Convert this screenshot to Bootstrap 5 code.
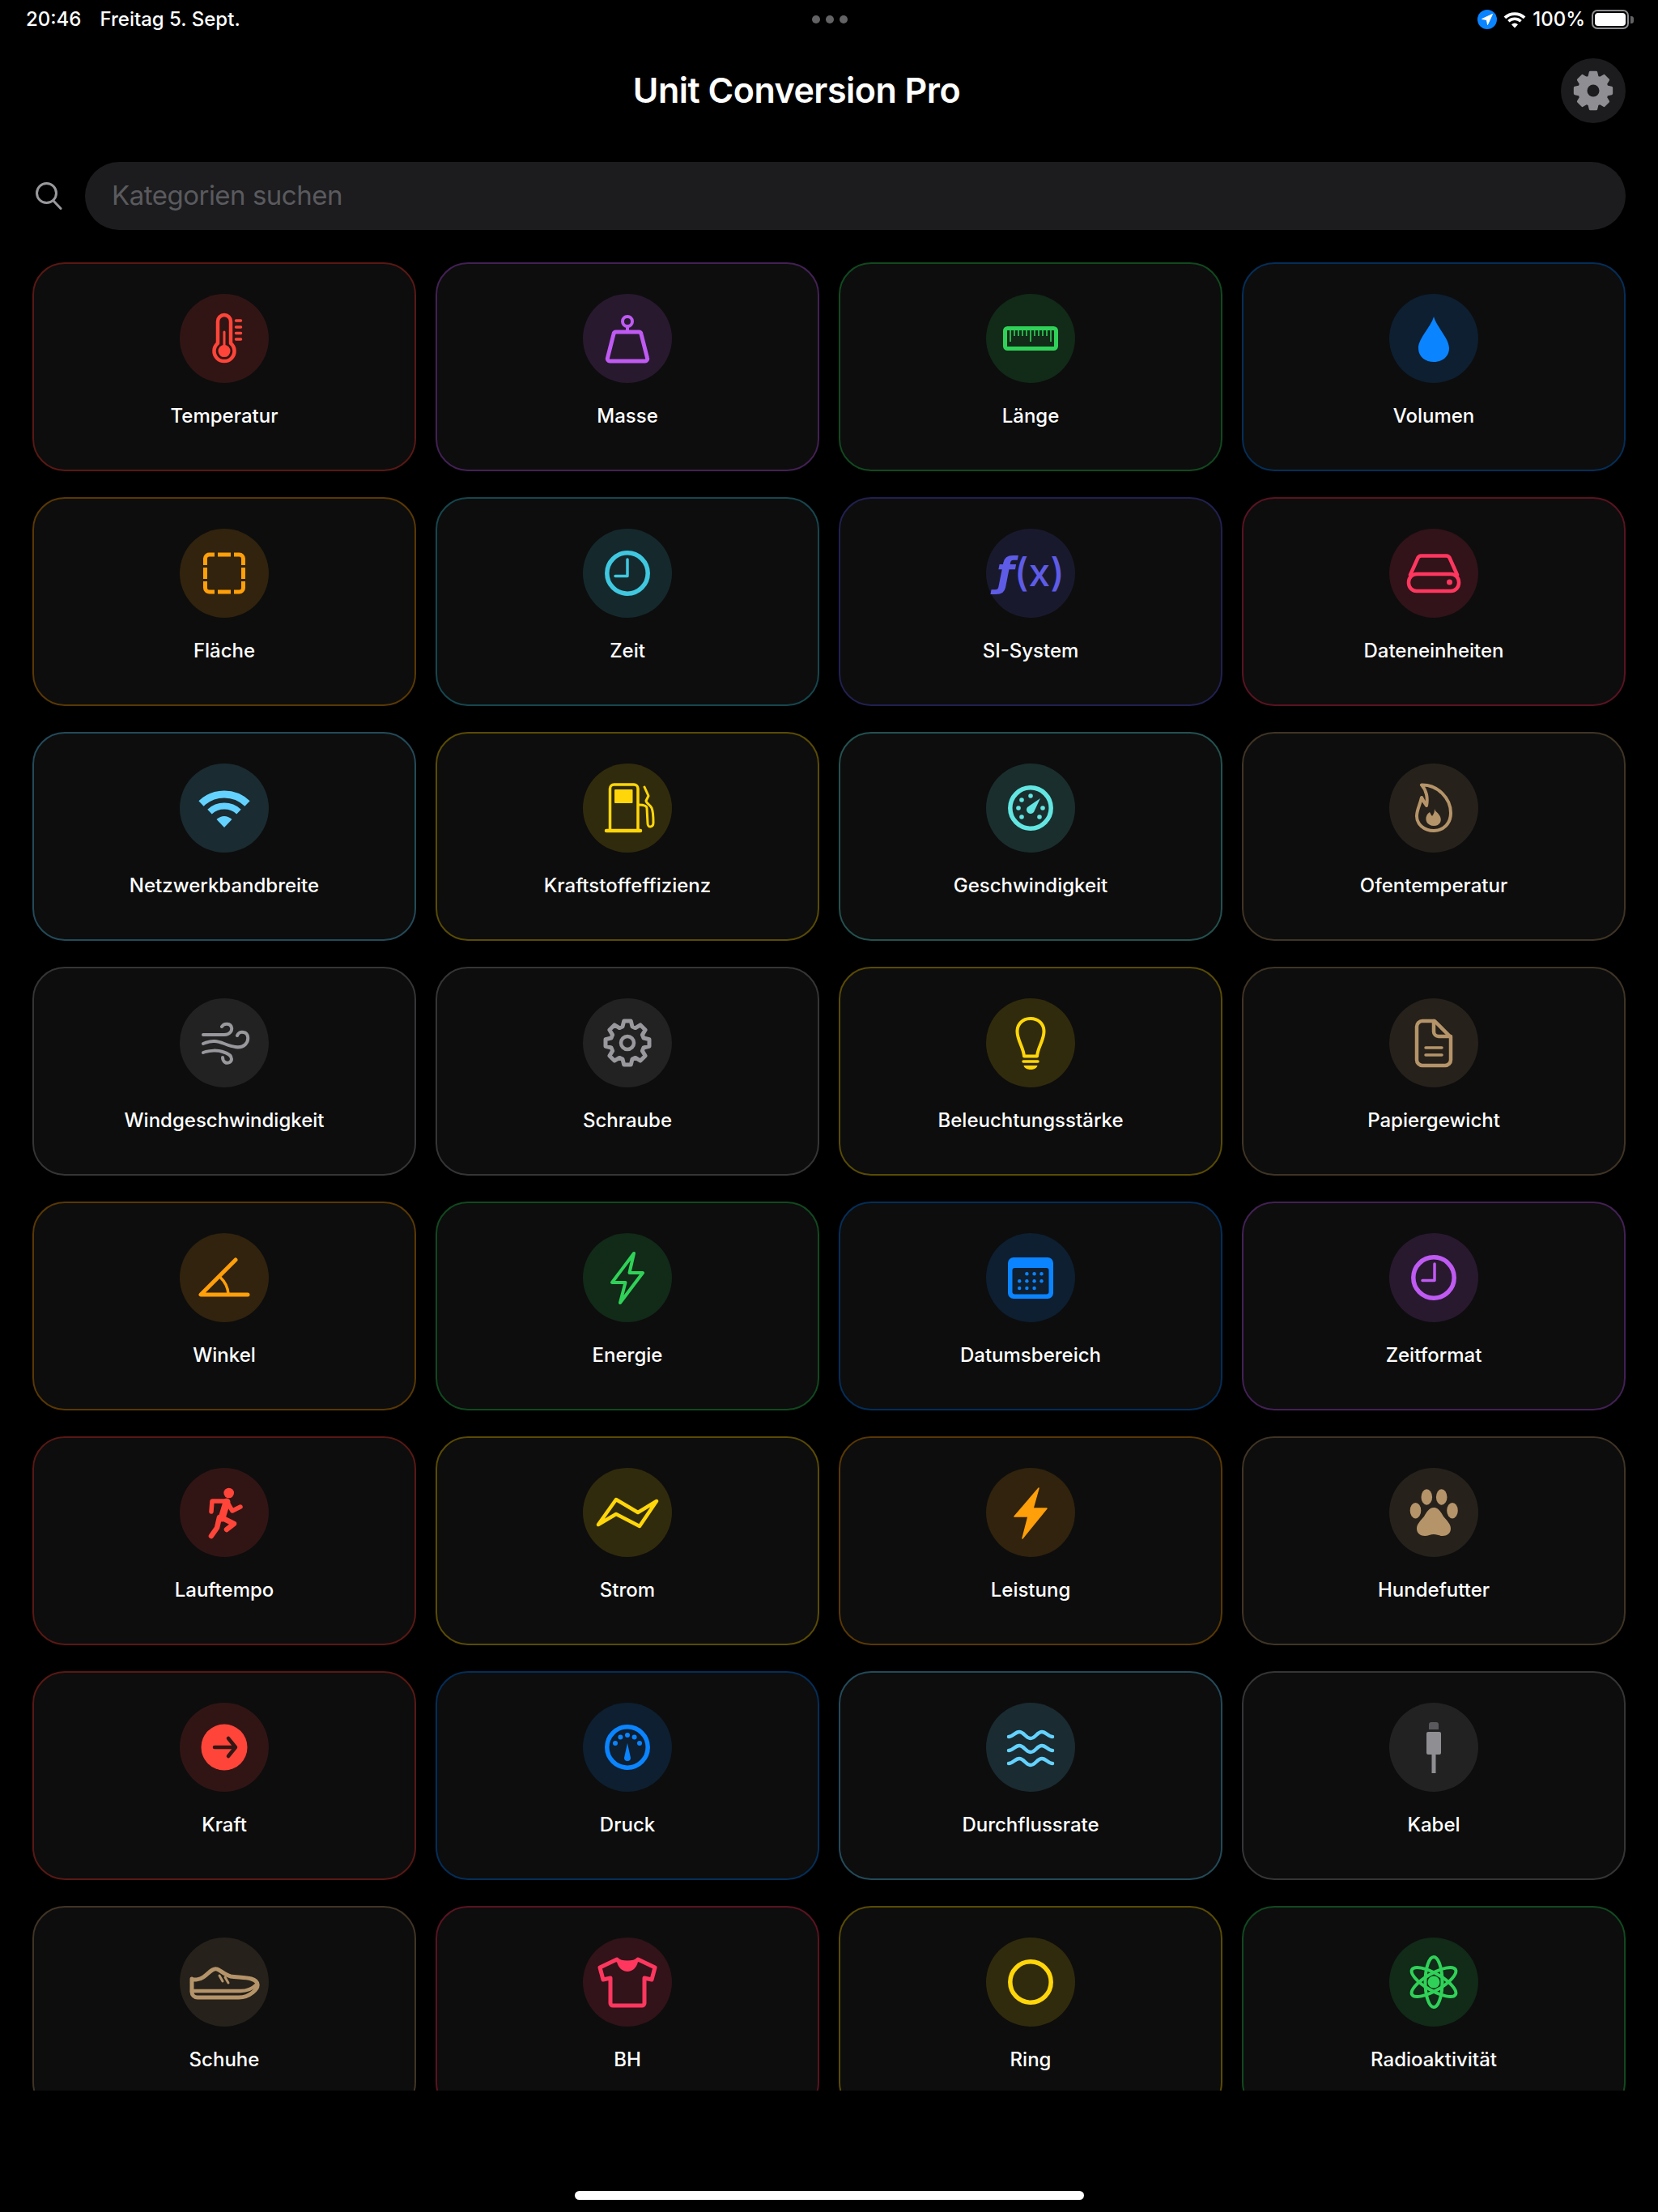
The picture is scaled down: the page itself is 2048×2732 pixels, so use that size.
<!DOCTYPE html>
<html lang="de">
<head>
  <meta charset="UTF-8" />
  <meta name="viewport" content="width=device-width, initial-scale=1.0"/>
  <title>Unit Conversion Pro</title>
  <link href="https://cdn.jsdelivr.net/npm/bootstrap@5.3.3/dist/css/bootstrap.min.css" rel="stylesheet" />
  <style>
    body { background: #000; color: #fff; font-family: Inter, "Liberation Sans", sans-serif; height: 2732px; overflow: hidden; }

    .status-strip { height: 48px; padding: 0 30px 0 32px; font-size: 24px; font-weight: 500; }
    .status-strip > div { flex: 1 1 0; }
    .status-dot { width: 10px; height: 10px; background: #636366; }
    .dot-gap { gap: 7px; }
    .clock-gap { gap: 23px; }
    .status-icons { gap: 8px; }
    .battery-shell { width: 46px; height: 24px; border: 2px solid #8e8e93; border-radius: 7px; padding: 2px; }
    .battery-fill { background: #fff; border-radius: 4px; }
    .battery-nub { width: 4px; height: 9px; background: #636366; border-radius: 0 3px 3px 0; margin-left: 2px; }

    .head-row { height: 80px; margin-top: 24px; padding: 0 40px; }
    .head-side { width: 80px; height: 80px; }
    .gear-btn { background: #1c1c1e; }
    .app-title { font-size: 43px; font-weight: 600; letter-spacing: -0.5px; margin: 0; }

    .search-row { margin-top: 48px; padding: 0 40px 0 44px; gap: 28px; }
    .search-box { height: 84px; background: #1c1c1e; padding-left: 33px; font-size: 33px; letter-spacing: -0.5px; color: #5a5a5e; }

    .grid-clip { margin-top: 40px; height: 2258px; overflow: hidden; padding: 0 40px; }
    .cat-row { --bs-gutter-x: 24px; --bs-gutter-y: 32px; }
    .cat-card { --bs-card-bg: #0d0d0d; --bs-card-border-width: 2px; --bs-card-border-radius: 40px; --bs-card-inner-border-radius: 38px;
      --bs-card-border-color: color-mix(in srgb, var(--tone) 35%, #000); height: 258px; padding-top: 37px; }
    .icon-bubble { width: 110px; height: 110px; color: var(--tone); background: color-mix(in srgb, var(--tone) 15%, #0d0d0d); }
    .cat-name { font-size: 24px; font-weight: 500; line-height: 36px; margin-top: 23px; color: #fff; }
    .ico { fill: none; stroke: currentColor; stroke-width: 4.5; stroke-linecap: round; stroke-linejoin: round; }
    .ico .solid { fill: currentColor; stroke: none; }
    .ico-label { font-family: Inter, "Liberation Sans", sans-serif; font-size: 48px; font-weight: 500; fill: currentColor; stroke: none; }
    .ico-func { font-family: "DejaVu Sans", sans-serif; font-size: 50px; font-weight: 700; }

    .tone-red { --tone: #ff453a; }
    .tone-purple { --tone: #bf5af2; }
    .tone-green { --tone: #30d158; }
    .tone-blue { --tone: #0a84ff; }
    .tone-orange { --tone: #ff9f0a; }
    .tone-cyan { --tone: #40c8e0; }
    .tone-indigo { --tone: #5e5ce6; }
    .tone-pink { --tone: #ff375f; }
    .tone-sky { --tone: #64d2ff; }
    .tone-yellow { --tone: #ffd60a; }
    .tone-mint { --tone: #63e6e2; }
    .tone-brown { --tone: #b59469; }
    .tone-gray { --tone: #98989d; }

    .home-bar { width: 629px; height: 11px; background: #fff; margin-top: 124px; margin-left: 710px; }
  </style>
</head>
<body>

<div class="status-strip d-flex align-items-center">
  <div class="d-flex clock-gap"><span>20:46</span><span>Freitag 5. Sept.</span></div>
  <div class="d-flex justify-content-center dot-gap">
    <span class="status-dot rounded-circle"></span><span class="status-dot rounded-circle"></span><span class="status-dot rounded-circle"></span>
  </div>
  <div class="d-flex justify-content-end align-items-center status-icons">
    <svg width="24" height="24" viewBox="-12 -12 24 24"><circle r="12" fill="#0a84ff"/><path d="M6.5 -6.5 L-6.5 -0.5 L-0.5 0.5 L0.5 6.5Z" fill="#fff" stroke="#fff" stroke-linejoin="round"/></svg>
    <svg width="28" height="21" viewBox="-33 -24 66 49" fill="none" stroke="#fff"><path stroke-width="9" d="M-28.5 -5.5A41 41 0 0 1 28.5 -5.5"/><path stroke-width="8" d="M-18 4.6A26.5 26.5 0 0 1 18 4.6"/><path fill="#fff" stroke="none" d="M0 24L-9.5 14Q0 6 9.5 14Z"/></svg>
    <span>100%</span>
    <div class="d-flex align-items-center">
      <div class="battery-shell d-flex"><div class="battery-fill flex-grow-1"></div></div>
      <div class="battery-nub"></div>
    </div>
  </div>
</div>

<div class="head-row d-flex align-items-center">
  <h1 class="app-title flex-grow-1 text-center">Unit Conversion Pro</h1>
  <div class="head-side gear-btn rounded-circle d-flex align-items-center justify-content-center">
    <svg width="50" height="50" viewBox="-30 -30 60 60"><path fill="#8e8e93" stroke="#8e8e93" stroke-width="4" stroke-linejoin="round" d="M-6 -20L-4.3 -27H4.3L6 -20L9.9 -18.4L16.05 -22.1L22.1 -16.05L18.4 -9.9L20 -6L27 -4.3V4.3L20 6L18.4 9.9L22.1 16.05L16.05 22.1L9.9 18.4L6 20L4.3 27H-4.3L-6 20L-9.9 18.4L-16.05 22.1L-22.1 16.05L-18.4 9.9L-20 6L-27 4.3V-4.3L-20 -6L-18.4 -9.9L-22.1 -16.05L-16.05 -22.1L-9.9 -18.4Z"/><circle r="9" fill="#1c1c1e"/></svg>
  </div>
</div>

<div class="search-row d-flex align-items-center">
  <svg width="33" height="34" viewBox="0 0 33 34" fill="none" stroke="#98989d" stroke-width="3" stroke-linecap="round"><circle cx="13.5" cy="13.5" r="12"/><path d="M22 23L31 32.5"/></svg>
  <div class="search-box rounded-pill flex-grow-1 d-flex align-items-center">Kategorien suchen</div>
</div>

<div class="grid-clip">
  <div class="row row-cols-4 cat-row">

    <div class="col"><div class="card cat-card tone-red align-items-center">
      <div class="icon-bubble rounded-circle"><svg class="ico" width="110" height="110" viewBox="-55 -55 110 110"><path d="M-8 6V-21a8 8 0 0 1 16 0V6a12.5 12.5 0 1 1 -16 0Z"/><circle class="solid" cy="15.6" r="7.5"/><path stroke-width="3" d="M0 -8V15"/><path stroke-width="3.5" d="M14.5 -22H20.5M14.5 -14H20.5M14.5 -6.5H20.5M14.5 1H20.5"/></svg></div>
      <div class="cat-name">Temperatur</div>
    </div></div>
    <div class="col"><div class="card cat-card tone-purple align-items-center">
      <div class="icon-bubble rounded-circle"><svg class="ico" width="110" height="110" viewBox="-55 -55 110 110"><circle stroke-width="4" cy="-21" r="6"/><path stroke-width="4" d="M0 -15V-9"/><path stroke-width="5" d="M-14 -8H14a3 3 0 0 1 3 2.5L24.5 24a3 3 0 0 1 -3 4H-21.5a3 3 0 0 1 -3 -4L-17 -5.5a3 3 0 0 1 3 -2.5Z"/></svg></div>
      <div class="cat-name">Masse</div>
    </div></div>
    <div class="col"><div class="card cat-card tone-green align-items-center">
      <div class="icon-bubble rounded-circle"><svg class="ico" width="110" height="110" viewBox="-55 -55 110 110"><rect stroke-width="5" x="-31.5" y="-12.5" width="63" height="25" rx="3"/><path stroke-width="1.6" stroke-linecap="butt" d="M-25 -12V4M-20 -12V-3M-15 -12V-3M-10 -12V-3M-5 -12V-3M0 -12V4M5 -12V-3M10 -12V-3M15 -12V-3M20 -12V-3M25 -12V4"/></svg></div>
      <div class="cat-name">Länge</div>
    </div></div>
    <div class="col"><div class="card cat-card tone-blue align-items-center">
      <div class="icon-bubble rounded-circle"><svg class="ico" width="110" height="110" viewBox="-55 -55 110 110"><path class="solid" d="M0 -27C3 -15 19 0 19 12C19 23 10 29 0 29C-10 29 -19 23 -19 12C-19 0 -3 -15 0 -27Z"/></svg></div>
      <div class="cat-name">Volumen</div>
    </div></div>

    <div class="col"><div class="card cat-card tone-orange align-items-center">
      <div class="icon-bubble rounded-circle"><svg class="ico" width="110" height="110" viewBox="-55 -55 110 110"><path stroke-width="5" stroke-linecap="butt" d="M-23.5 -10V-18a5 5 0 0 1 5 -5H-12M-8 -23H8M12 -23H18.5a5 5 0 0 1 5 5V-10M23.5 -7V7M23.5 10V18a5 5 0 0 1 -5 5H12M8 23H-8M-12 23H-18.5a5 5 0 0 1 -5 -5V10M-23.5 7V-7"/></svg></div>
      <div class="cat-name">Fläche</div>
    </div></div>
    <div class="col"><div class="card cat-card tone-cyan align-items-center">
      <div class="icon-bubble rounded-circle"><svg class="ico" width="110" height="110" viewBox="-55 -55 110 110"><circle stroke-width="5.5" r="25.2"/><path stroke-width="3.5" d="M0 -17V3.5H-15"/></svg></div>
      <div class="cat-name">Zeit</div>
    </div></div>
    <div class="col"><div class="card cat-card tone-indigo align-items-center">
      <div class="icon-bubble rounded-circle"><svg class="ico" width="110" height="110" viewBox="-55 -55 110 110"><text class="ico-label" text-anchor="middle" y="16"><tspan class="ico-func" font-style="italic">ƒ</tspan>(x)</text></svg></div>
      <div class="cat-name">SI-System</div>
    </div></div>
    <div class="col"><div class="card cat-card tone-pink align-items-center">
      <div class="icon-bubble rounded-circle"><svg class="ico" width="110" height="110" viewBox="-55 -55 110 110"><rect x="-31" y="1" width="62" height="21" rx="10"/><path d="M-29 2L-20 -18a5 5 0 0 1 4 -3.5H16a5 5 0 0 1 4 3.5L29 2"/><circle class="solid" cx="19.5" cy="11" r="3.5"/></svg></div>
      <div class="cat-name">Dateneinheiten</div>
    </div></div>

    <div class="col"><div class="card cat-card tone-sky align-items-center">
      <div class="icon-bubble rounded-circle"><svg class="ico" width="110" height="110" viewBox="-55 -55 110 110"><path stroke-width="9" stroke-linecap="butt" d="M-28.5 -5.5A41 41 0 0 1 28.5 -5.5"/><path stroke-width="8" stroke-linecap="butt" d="M-18 4.6A26.5 26.5 0 0 1 18 4.6"/><path class="solid" d="M0 24L-9.5 14Q0 6 9.5 14Z"/></svg></div>
      <div class="cat-name">Netzwerkbandbreite</div>
    </div></div>
    <div class="col"><div class="card cat-card tone-yellow align-items-center">
      <div class="icon-bubble rounded-circle"><svg class="ico" width="110" height="110" viewBox="-55 -55 110 110"><path stroke-width="3.5" d="M-21.5 28V-24a5 5 0 0 1 5 -5H8a5 5 0 0 1 5 5V28"/><path stroke-width="4.5" d="M-26 28H16"/><rect class="solid" x="-16" y="-23" width="22.5" height="17" rx="1"/><path stroke-width="3" d="M21 -26L26 -15L23 -9C23 -6 28 -4 30 0C32 5 32 16 32 18C32 24 25 25 25 19L24 0Q24 -4 14 -4"/></svg></div>
      <div class="cat-name">Kraftstoffeffizienz</div>
    </div></div>
    <div class="col"><div class="card cat-card tone-mint align-items-center">
      <div class="icon-bubble rounded-circle"><svg class="ico" width="110" height="110" viewBox="-55 -55 110 110"><circle stroke-width="5.5" r="25.2"/><g class="solid"><circle cy="-15" r="2.8"/><circle cx="-11" cy="-10" r="2.8"/><circle cx="-15" r="2.8"/><circle cx="15" r="2.8"/><circle cx="-11" cy="11" r="2.8"/><circle cx="11" cy="11" r="2.8"/></g><path class="solid" d="M12 -12L4 5A5 5 0 0 1 -4 -1Z"/></svg></div>
      <div class="cat-name">Geschwindigkeit</div>
    </div></div>
    <div class="col"><div class="card cat-card tone-brown align-items-center">
      <div class="icon-bubble rounded-circle"><svg class="ico" width="110" height="110" viewBox="-55 -55 110 110"><path stroke-width="4" d="M-15 -28.5C5 -29 21 -12 21 6C21 19 12 28 0 28C-12 28 -21 20 -21 10C-21 2 -17 -4 -15 -13C-13 -9 -11 -6 -9 -3C-7 -12 -9 -22 -15 -28.5Z"/><path class="solid" d="M1 1C2 5 5 5 7 9C11 15 8 22 0 22C-8 22 -11 15 -9 10C-8 7 -6 6 -5 5C-4 7 -3 9 -2 10C0 7 1 5 1 1Z"/></svg></div>
      <div class="cat-name">Ofentemperatur</div>
    </div></div>

    <div class="col"><div class="card cat-card tone-gray align-items-center">
      <div class="icon-bubble rounded-circle"><svg class="ico" width="110" height="110" viewBox="-55 -55 110 110"><path stroke-width="4" d="M-26 -10H0C7 -10 10 -15 9 -19C8 -24 0 -25 -3 -20M-26 1C-15 -4 -8 -2 0 1C10 5 20 8 26 2C31 -3 30 -12 24 -13C20 -14 17 -12 16 -9M-26 12C-18 9 -8 9 -2 11C5 13 9 16 9 20C9 24 4 26 1 24C-2 22 -2 20 -2 18"/></svg></div>
      <div class="cat-name">Windgeschwindigkeit</div>
    </div></div>
    <div class="col"><div class="card cat-card tone-gray align-items-center">
      <div class="icon-bubble rounded-circle"><svg class="ico" width="110" height="110" viewBox="-55 -55 110 110"><path stroke-width="5" d="M-6 -20L-4.3 -27H4.3L6 -20L9.9 -18.4L16.05 -22.1L22.1 -16.05L18.4 -9.9L20 -6L27 -4.3V4.3L20 6L18.4 9.9L22.1 16.05L16.05 22.1L9.9 18.4L6 20L4.3 27H-4.3L-6 20L-9.9 18.4L-16.05 22.1L-22.1 16.05L-18.4 9.9L-20 6L-27 4.3V-4.3L-20 -6L-18.4 -9.9L-22.1 -16.05L-16.05 -22.1L-9.9 -18.4Z"/><circle stroke-width="4.5" r="8"/></svg></div>
      <div class="cat-name">Schraube</div>
    </div></div>
    <div class="col"><div class="card cat-card tone-yellow align-items-center">
      <div class="icon-bubble rounded-circle"><svg class="ico" width="110" height="110" viewBox="-55 -55 110 110"><path stroke-width="4" d="M-8 16.5C-9 5 -16.5 -3 -16.5 -14C-16.5 -24 -9 -30 0 -30C9 -30 16.5 -24 16.5 -14C16.5 -3 9 5 8 16.5Z"/><path stroke-width="3.5" d="M-9 23H9"/><path class="solid" d="M-8.5 28H8.5C8 31 4 33 0 33C-4 33 -8 31 -8.5 28Z"/></svg></div>
      <div class="cat-name">Beleuchtungsstärke</div>
    </div></div>
    <div class="col"><div class="card cat-card tone-brown align-items-center">
      <div class="icon-bubble rounded-circle"><svg class="ico" width="110" height="110" viewBox="-55 -55 110 110"><path d="M-14 -27H1L21 -7V21a7 7 0 0 1 -7 7H-14a7 7 0 0 1 -7 -7V-20a7 7 0 0 1 7 -7Z"/><path d="M0 -27V-14a6 6 0 0 0 6 6H21"/><path stroke-width="3.5" d="M-10 6H10M-10 15H10"/></svg></div>
      <div class="cat-name">Papiergewicht</div>
    </div></div>

    <div class="col"><div class="card cat-card tone-orange align-items-center">
      <div class="icon-bubble rounded-circle"><svg class="ico" width="110" height="110" viewBox="-55 -55 110 110"><path stroke-width="5" d="M14 -22L-29 21H29"/><path stroke-width="3.5" d="M-4.5 0Q4 8 5 20"/></svg></div>
      <div class="cat-name">Winkel</div>
    </div></div>
    <div class="col"><div class="card cat-card tone-green align-items-center">
      <div class="icon-bubble rounded-circle"><svg class="ico" width="110" height="110" viewBox="-55 -55 110 110"><path stroke-width="4" d="M8 -30L-19 6H-2.5L-9 31L19 -6H2.5Z"/></svg></div>
      <div class="cat-name">Energie</div>
    </div></div>
    <div class="col"><div class="card cat-card tone-blue align-items-center">
      <div class="icon-bubble rounded-circle"><svg class="ico" width="110" height="110" viewBox="-55 -55 110 110"><rect class="solid" x="-28" y="-25" width="56" height="51" rx="7"/><rect x="-22.5" y="-12" width="45" height="32.5" rx="3" fill="#0d1f31" stroke="none"/><g class="solid"><circle cx="-4.6" cy="-4.7" r="2.2"/><circle cx="4.6" cy="-4.7" r="2.2"/><circle cx="13.5" cy="-4.7" r="2.2"/><circle cx="-13.8" cy="4.3" r="2.2"/><circle cx="-4.6" cy="4.3" r="2.2"/><circle cx="4.6" cy="4.3" r="2.2"/><circle cx="13.5" cy="4.3" r="2.2"/><circle cx="-13.8" cy="13" r="2.2"/><circle cx="-4.6" cy="13" r="2.2"/><circle cx="4.6" cy="13" r="2.2"/></g></svg></div>
      <div class="cat-name">Datumsbereich</div>
    </div></div>
    <div class="col"><div class="card cat-card tone-purple align-items-center">
      <div class="icon-bubble rounded-circle"><svg class="ico" width="110" height="110" viewBox="-55 -55 110 110"><circle stroke-width="5.5" r="25.2"/><path stroke-width="3.5" d="M1 -17V3.5H-14"/></svg></div>
      <div class="cat-name">Zeitformat</div>
    </div></div>

    <div class="col"><div class="card cat-card tone-red align-items-center">
      <div class="icon-bubble rounded-circle"><svg class="ico" width="110" height="110" viewBox="-55 -55 110 110"><ellipse class="solid" cx="5.7" cy="-24" rx="6.3" ry="6.3"/><path stroke-width="9" d="M3 -13L-3 7"/><path stroke-width="5.5" d="M-16 -1L-15 -14H2M4 -12L10 -2L20 -7"/><path stroke-width="6.5" d="M-4 6L12 14L3 21M-6 6L-9 19L-16 29"/></svg></div>
      <div class="cat-name">Lauftempo</div>
    </div></div>
    <div class="col"><div class="card cat-card tone-yellow align-items-center">
      <div class="icon-bubble rounded-circle"><svg class="ico" width="110" height="110" viewBox="-55 -55 110 110"><path d="M-36 15L-14 -16L13 0L36 -14L15 17L-14 2Z"/></svg></div>
      <div class="cat-name">Strom</div>
    </div></div>
    <div class="col"><div class="card cat-card tone-orange align-items-center">
      <div class="icon-bubble rounded-circle"><svg class="ico" width="110" height="110" viewBox="-55 -55 110 110"><path fill="currentColor" stroke-width="1.5" d="M10 -30L-20 5H-3L-10 32L20 -5H3Z"/></svg></div>
      <div class="cat-name">Leistung</div>
    </div></div>
    <div class="col"><div class="card cat-card tone-brown align-items-center">
      <div class="icon-bubble rounded-circle"><svg class="ico" width="110" height="110" viewBox="-55 -55 110 110"><g class="solid"><ellipse cx="-8.7" cy="-19" rx="6.8" ry="9.7"/><ellipse cx="9.7" cy="-19" rx="6.8" ry="9.7"/><ellipse cx="-22.5" cy="-2.3" rx="6.8" ry="9.7"/><ellipse cx="23" cy="-2.3" rx="6.8" ry="9.7"/><path d="M0 -6C6 -6 9 0 12 5C16 10 21 14 21 20C21 26 16 29 11 29C7 29 4 27 0 27C-4 27 -7 29 -11 29C-16 29 -21 26 -21 20C-21 14 -16 10 -12 5C-9 0 -6 -6 0 -6Z"/></g></svg></div>
      <div class="cat-name">Hundefutter</div>
    </div></div>

    <div class="col"><div class="card cat-card tone-red align-items-center">
      <div class="icon-bubble rounded-circle"><svg class="ico" width="110" height="110" viewBox="-55 -55 110 110"><circle class="solid" r="28.5"/><path stroke="#331714" stroke-width="4.5" d="M-12 0H13M5 -11L14 0L5 11"/></svg></div>
      <div class="cat-name">Kraft</div>
    </div></div>
    <div class="col"><div class="card cat-card tone-blue align-items-center">
      <div class="icon-bubble rounded-circle"><svg class="ico" width="110" height="110" viewBox="-55 -55 110 110"><circle stroke-width="5.5" r="25.2"/><g class="solid"><circle cy="-15" r="3"/><circle cx="-8.6" cy="-12.5" r="3"/><circle cx="8.6" cy="-12.5" r="3"/><circle cx="-15" cy="-5" r="3"/><circle cx="15" cy="-5" r="3"/></g><path class="solid" d="M0 -5L4 13a4 4 0 1 1 -8 0Z"/></svg></div>
      <div class="cat-name">Druck</div>
    </div></div>
    <div class="col"><div class="card cat-card tone-sky align-items-center">
      <div class="icon-bubble rounded-circle"><svg class="ico" width="110" height="110" viewBox="-55 -55 110 110"><path d="M-27 -13C-22 -13 -19 -19 -14 -19C-8 -19 -6 -11 0 -11C6 -11 8 -19 14 -19C19 -19 22 -13 27 -13M-27 4C-22 4 -19 -2 -14 -2C-8 -2 -6 6 0 6C6 6 8 -2 14 -2C19 -2 22 4 27 4M-27 20C-22 20 -19 14 -14 14C-8 14 -6 22 0 22C6 22 8 14 14 14C19 14 22 20 27 20"/></svg></div>
      <div class="cat-name">Durchflussrate</div>
    </div></div>
    <div class="col"><div class="card cat-card tone-gray align-items-center">
      <div class="icon-bubble rounded-circle"><svg class="ico" width="110" height="110" viewBox="-55 -55 110 110"><path fill="#5a5a5e" stroke="none" d="M-6 -22V-28a3 3 0 0 1 3 -3H3a3 3 0 0 1 3 3V-22Z"/><rect x="-9" y="-19" width="18" height="28" rx="2" fill="#8e8e93" stroke="none"/><rect x="-2.5" y="9" width="5" height="23" fill="#8e8e93" stroke="none"/></svg></div>
      <div class="cat-name">Kabel</div>
    </div></div>

    <div class="col"><div class="card cat-card tone-brown align-items-center">
      <div class="icon-bubble rounded-circle"><svg class="ico" width="110" height="110" viewBox="-55 -55 110 110"><path stroke-width="5" d="M-40 -4C-38 -2 -30 -3 -26 -6C-20 -10 -14 -18 -9 -16C-5 -15 0 -9 8 -7C20 -5 40 -7 41 3C42 8 32 19 18 19H-33C-37 19 -40 16 -40 12Z"/><path stroke-width="4.5" d="M-40 11H20C26 11 34 9 40 3"/><path stroke-width="3" d="M-6 -8L-2 -1M1 -6L5 1"/></svg></div>
      <div class="cat-name">Schuhe</div>
    </div></div>
    <div class="col"><div class="card cat-card tone-pink align-items-center">
      <div class="icon-bubble rounded-circle"><svg class="ico" width="110" height="110" viewBox="-55 -55 110 110"><path stroke-width="5" d="M-13 -28C-10 -24 -5 -24 0 -24C5 -24 10 -24 13 -28L34 -18L30 -3L21 -5V26a3 3 0 0 1 -3 3H-18a3 3 0 0 1 -3 -3V-5L-30 -3L-34 -18Z"/><path class="solid" d="M-13 -26C-12 -17 -5 -13 0 -13C5 -13 12 -17 13 -26C10 -22 -10 -22 -13 -26Z"/></svg></div>
      <div class="cat-name">BH</div>
    </div></div>
    <div class="col"><div class="card cat-card tone-yellow align-items-center">
      <div class="icon-bubble rounded-circle"><svg class="ico" width="110" height="110" viewBox="-55 -55 110 110"><circle stroke-width="5.5" r="25.2"/></svg></div>
      <div class="cat-name">Ring</div>
    </div></div>
    <div class="col"><div class="card cat-card tone-green align-items-center">
      <div class="icon-bubble rounded-circle"><svg class="ico" width="110" height="110" viewBox="-55 -55 110 110"><g stroke-width="4"><ellipse rx="10.5" ry="31"/><ellipse rx="10.5" ry="31" transform="rotate(60)"/><ellipse rx="10.5" ry="31" transform="rotate(-60)"/></g><circle class="solid" r="7.5"/></svg></div>
      <div class="cat-name">Radioaktivität</div>
    </div></div>

  </div>
</div>

<div class="home-bar rounded-pill"></div>

<script src="https://cdn.jsdelivr.net/npm/bootstrap@5.3.3/dist/js/bootstrap.bundle.min.js"></script>
</body>
</html>
